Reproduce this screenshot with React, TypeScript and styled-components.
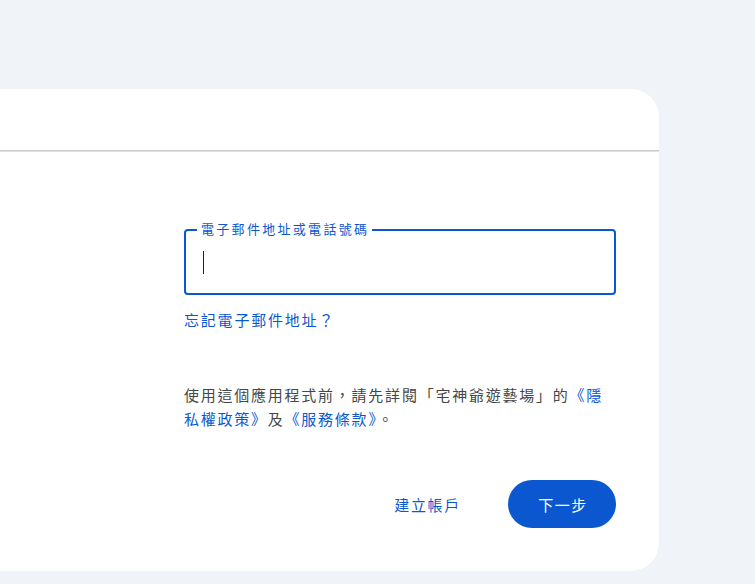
import React from "react";
import styled, { createGlobalStyle } from "styled-components";

const Global = createGlobalStyle`
  html, body { margin: 0; padding: 0; background: #f0f4f9; }
  body { font-family: "Noto Sans CJK TC", "Noto Sans", Roboto, sans-serif; }
`;

const Page = styled.div`
  height: 584px;
  overflow: hidden;
  padding-top: 89px;
  box-sizing: border-box;
`;

const Card = styled.div`
  margin-left: -40px;
  width: 699px;
  height: 482px;
  background: #fff;
  border-radius: 28px;
  display: flex;
  flex-direction: column;
`;

const Header = styled.div`
  height: 61px;
`;

const Divider = styled.div`
  height: 2px;
  background: linear-gradient(#c9c9c9 0 1px, #e1e1e1 1px 2px);
`;

const Body = styled.div`
  flex: 1;
  display: grid;
  grid-template-columns: 1fr 432px;
  padding: 77px 43px 43px 0;
`;

const Column = styled.div`
  grid-column: 2;
  display: flex;
  flex-direction: column;
`;

const Field = styled.div`
  position: relative;
  height: 66px;
  border: 2px solid #0b57d0;
  border-radius: 4px;
  box-sizing: border-box;
  display: flex;
  align-items: center;
  padding-left: 17px;
`;

const FieldLabel = styled.span`
  position: absolute;
  top: -10px;
  left: 11px;
  padding: 0 3px 0 4px;
  background: #fff;
  color: #0b57d0;
  font-size: 13px;
  line-height: 16px;
  letter-spacing: 2.3px;
  white-space: nowrap;
`;

const Caret = styled.span`
  width: 1px;
  height: 23px;
  background: #1f1f1f;
`;

const Link = styled.a`
  color: #0b57d0;
  text-decoration: none;
  cursor: pointer;
`;

const Forgot = styled(Link)`
  margin-top: 15px;
  font-size: 15px;
  letter-spacing: 1.8px;
  line-height: 20px;
  align-self: flex-start;
`;

const Notice = styled.p`
  margin: 53px 0 0;
  color: #444746;
  font-size: 15px;
  line-height: 24px;
  letter-spacing: 1.76px;
`;

const Actions = styled.div`
  margin-top: auto;
  display: flex;
  justify-content: flex-end;
  align-items: center;
  gap: 35px;
`;

const TextButton = styled.button`
  border: none;
  background: none;
  padding: 0 12px;
  height: 48px;
  color: #0b57d0;
  font-family: inherit;
  font-size: 15px;
  letter-spacing: 1.7px;
  cursor: pointer;
`;

const PrimaryButton = styled.button`
  border: none;
  width: 108px;
  height: 48px;
  border-radius: 24px;
  background: #0b57d0;
  color: #fff;
  font-family: inherit;
  font-size: 15px;
  letter-spacing: 1.5px;
  padding: 0 0 0 2px;
  cursor: pointer;
`;

export default function App() {
  return (
    <>
      <Global />
      <Page>
        <Card>
          <Header />
          <Divider />
          <Body>
            <Column>
              <Field>
                <FieldLabel>電子郵件地址或電話號碼</FieldLabel>
                <Caret />
              </Field>
              <Forgot>忘記電子郵件地址？</Forgot>
              <Notice>
                使用這個應用程式前，請先詳閱「宅神爺遊藝場」的<Link>《隱私權政策》</Link>及<Link>《服務條款》</Link>。
              </Notice>
              <Actions>
                <TextButton>建立帳戶</TextButton>
                <PrimaryButton>下一步</PrimaryButton>
              </Actions>
            </Column>
          </Body>
        </Card>
      </Page>
    </>
  );
}
